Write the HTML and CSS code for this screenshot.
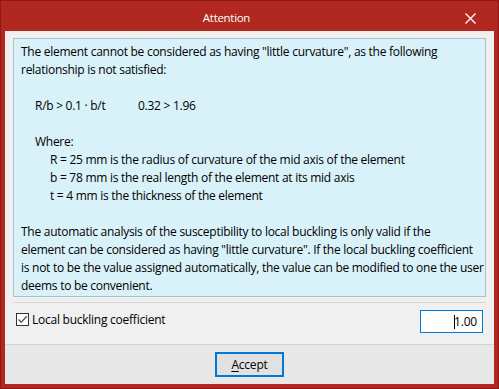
FILE: index.html
```html
<!DOCTYPE html>
<html>
<head>
<meta charset="utf-8">
<link rel="stylesheet" href="styles.css">
</head>
<body>
<div class="window">
  <div class="titlebar">
    <span class="title">Attention</span>
    <span class="close">
      <svg width="11" height="11" viewBox="0 0 11 11"><path d="M0.5 0.5L10.5 10.5M10.5 0.5L0.5 10.5" stroke="#fff" stroke-width="1.3" fill="none"/></svg>
    </span>
  </div>
  <div class="client">
    <div class="panel">
      <p class="line">The element cannot be considered as having "little curvature", as the following</p>
      <p class="line">relationship is not satisfied:</p>
      <p class="line">&nbsp;</p>
      <p class="line ind1"><span class="formula">R/b &gt; 0.1 · b/t</span><span>0.32 &gt; 1.96</span></p>
      <p class="line">&nbsp;</p>
      <p class="line ind1">Where:</p>
      <p class="line ind2">R = 25 mm is the radius of curvature of the mid axis of the element</p>
      <p class="line ind2">b = 78 mm is the real length of the element at its mid axis</p>
      <p class="line ind2">t = 4 mm is the thickness of the element</p>
      <p class="line">&nbsp;</p>
      <p class="line">The automatic analysis of the susceptibility to local buckling is only valid if the</p>
      <p class="line">element can be considered as having "little curvature". If the local buckling coefficient</p>
      <p class="line">is not to be the value assigned automatically, the value can be modified to one the user</p>
      <p class="line">deems to be convenient.</p>
    </div>
    <div class="sep"></div>
    <div class="optrow">
      <label class="check">
        <span class="box">
          <svg width="11" height="11" viewBox="0 0 11 11"><path d="M1.5 5.5L4.2 8.3L9.8 2.2" stroke="#5a5a5a" stroke-width="1.4" fill="none"/></svg>
        </span>
        <span class="checklabel">Local buckling coefficient</span>
      </label>
      <div class="input"><span class="caret"></span>1.00</div>
    </div>
    <div class="footer">
      <button class="btn"><u>A</u>ccept</button>
    </div>
  </div>
</div>
</body>
</html>
```
FILE: styles.css
```css
html, body {
  margin: 0;
  padding: 0;
}
body {
  font-family: "Open Sans", "Noto Sans", sans-serif;
  font-size: 12px;
  color: #000;
}
.window {
  width: 499px;
  height: 389px;
  box-sizing: border-box;
  border: 1px solid #8e1a12;
  background: #b0281f;
  padding: 0 4px 4px 4px;
  display: flex;
  flex-direction: column;
}
.titlebar {
  height: 30px;
  flex: none;
  display: flex;
  align-items: center;
  justify-content: center;
  position: relative;
  padding-right: 46px;
}
.title {
  color: #fff;
  font-size: 11.5px;
  letter-spacing: -0.3px;
  margin-top: 2px;
}
.close {
  position: absolute;
  right: 18px;
  top: 12px;
  width: 11px;
  height: 11px;
  display: block;
}
.close svg { display: block; }
.client {
  flex: 1;
  background: #f0f0f0;
  display: flex;
  flex-direction: column;
}
.panel {
  margin: 7px 8px 0 8px;
  background: #d9f2f9;
  border: 1px solid #a6c3cb;
  padding: 4px 7px 1px 7px;
}
.line {
  margin: 0;
  height: 18px;
  line-height: 18px;
  white-space: nowrap;
  letter-spacing: -0.27px;
}
.ind1 { padding-left: 14px; }
.ind2 { padding-left: 29px; }
.formula {
  display: inline-block;
  width: 103px;
}
.sep {
  margin: 5px 8px 0 8px;
  height: 1px;
  background: #d6d6d6;
}
.optrow {
  height: 41px;
  display: flex;
  align-items: flex-start;
  justify-content: space-between;
  padding: 0 11px 0 11px;
  border-bottom: 1px solid #d4d4d4;
}
.check {
  display: flex;
  align-items: center;
  margin-top: 8px;
}
.box {
  width: 11px;
  height: 11px;
  border: 1px solid #333;
  background: #fff;
  display: block;
}
.box svg { display: block; }
.checklabel {
  margin-left: 3px;
  letter-spacing: -0.25px;
}
.input {
  margin-top: 7px;
  height: 21px;
  border: 1px solid #0078d7;
  background: #fff;
  text-align: right;
  line-height: 21px;
  padding-right: 5px;
  box-sizing: content-box;
  width: 56px;
  letter-spacing: -0.2px;
}
.caret {
  display: inline-block;
  width: 1px;
  height: 14px;
  background: #000;
  vertical-align: -3px;
  margin-right: -1px;
}
.footer {
  flex: 1;
  background: #e8e8e8;
  display: flex;
  justify-content: center;
  align-items: flex-start;
}
.btn {
  margin-top: 7px;
  width: 69px;
  height: 25px;
  border: 2px solid #0078d7;
  background: #e1e1e1;
  font-family: "Open Sans", "Noto Sans", sans-serif;
  font-size: 12px;
  color: #000;
  padding: 0;
  letter-spacing: -0.2px;
}
.btn u { text-underline-offset: 2px; }
```
